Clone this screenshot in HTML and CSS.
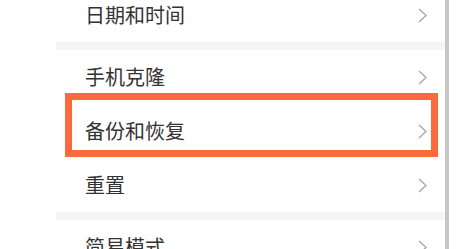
FILE: index.html
```html
<!DOCTYPE html>
<html lang="zh">
<head>
<meta charset="utf-8">
<link rel="stylesheet" href="styles.css">
</head>
<body>
<div class="screen">
  <div class="list">
    <div class="row first"><span class="label">日期和时间</span><svg class="chev" viewBox="0 0 9 15" width="9" height="15"><polyline points="1,1 8,7.5 1,14"/></svg></div>
    <div class="gap"></div>
    <div class="row"><span class="label">手机克隆</span><svg class="chev" viewBox="0 0 9 15" width="9" height="15"><polyline points="1,1 8,7.5 1,14"/></svg></div>
    <div class="row"><span class="label">备份和恢复</span><svg class="chev" viewBox="0 0 9 15" width="9" height="15"><polyline points="1,1 8,7.5 1,14"/></svg></div>
    <div class="row"><span class="label">重置</span><svg class="chev" viewBox="0 0 9 15" width="9" height="15"><polyline points="1,1 8,7.5 1,14"/></svg></div>
    <div class="gap"></div>
    <div class="row"><span class="label">简易模式</span><svg class="chev" viewBox="0 0 9 15" width="9" height="15"><polyline points="1,1 8,7.5 1,14"/></svg></div>
  </div>
  <div class="scrollbar"></div>
  <div class="highlight"></div>
</div>
</body>
</html>
```
FILE: styles.css
```css
html, body {
  margin: 0;
  padding: 0;
  background: #fff;
  overflow: hidden;
}
.screen {
  position: relative;
  width: 457px;
  height: 249px;
  display: flex;
  overflow: hidden;
  font-family: "Noto Sans CJK SC", "Noto Sans", sans-serif;
}
.list {
  width: 389px;
  margin-left: 56px;
  margin-top: -12px;
  display: flex;
  flex-direction: column;
}
.row {
  height: 54px;
  flex: none;
  display: flex;
  align-items: center;
  justify-content: space-between;
  padding: 0 18px 0 29px;
  background: #fff;
}
.label {
  font-size: 20px;
  color: #333;
  line-height: 1;
}
.chev {
  fill: none;
  stroke: #a6a6a6;
  stroke-width: 1.3;
}
.gap {
  height: 8px;
  flex: none;
  background: #f5f5f5;
}
.scrollbar {
  width: 4px;
  height: 249px;
  background: #c6c6c6;
  flex: none;
}
.highlight {
  position: absolute;
  left: 65px;
  top: 93px;
  width: 359px;
  height: 50px;
  border: 7px solid #fb6a3c;
}
```
